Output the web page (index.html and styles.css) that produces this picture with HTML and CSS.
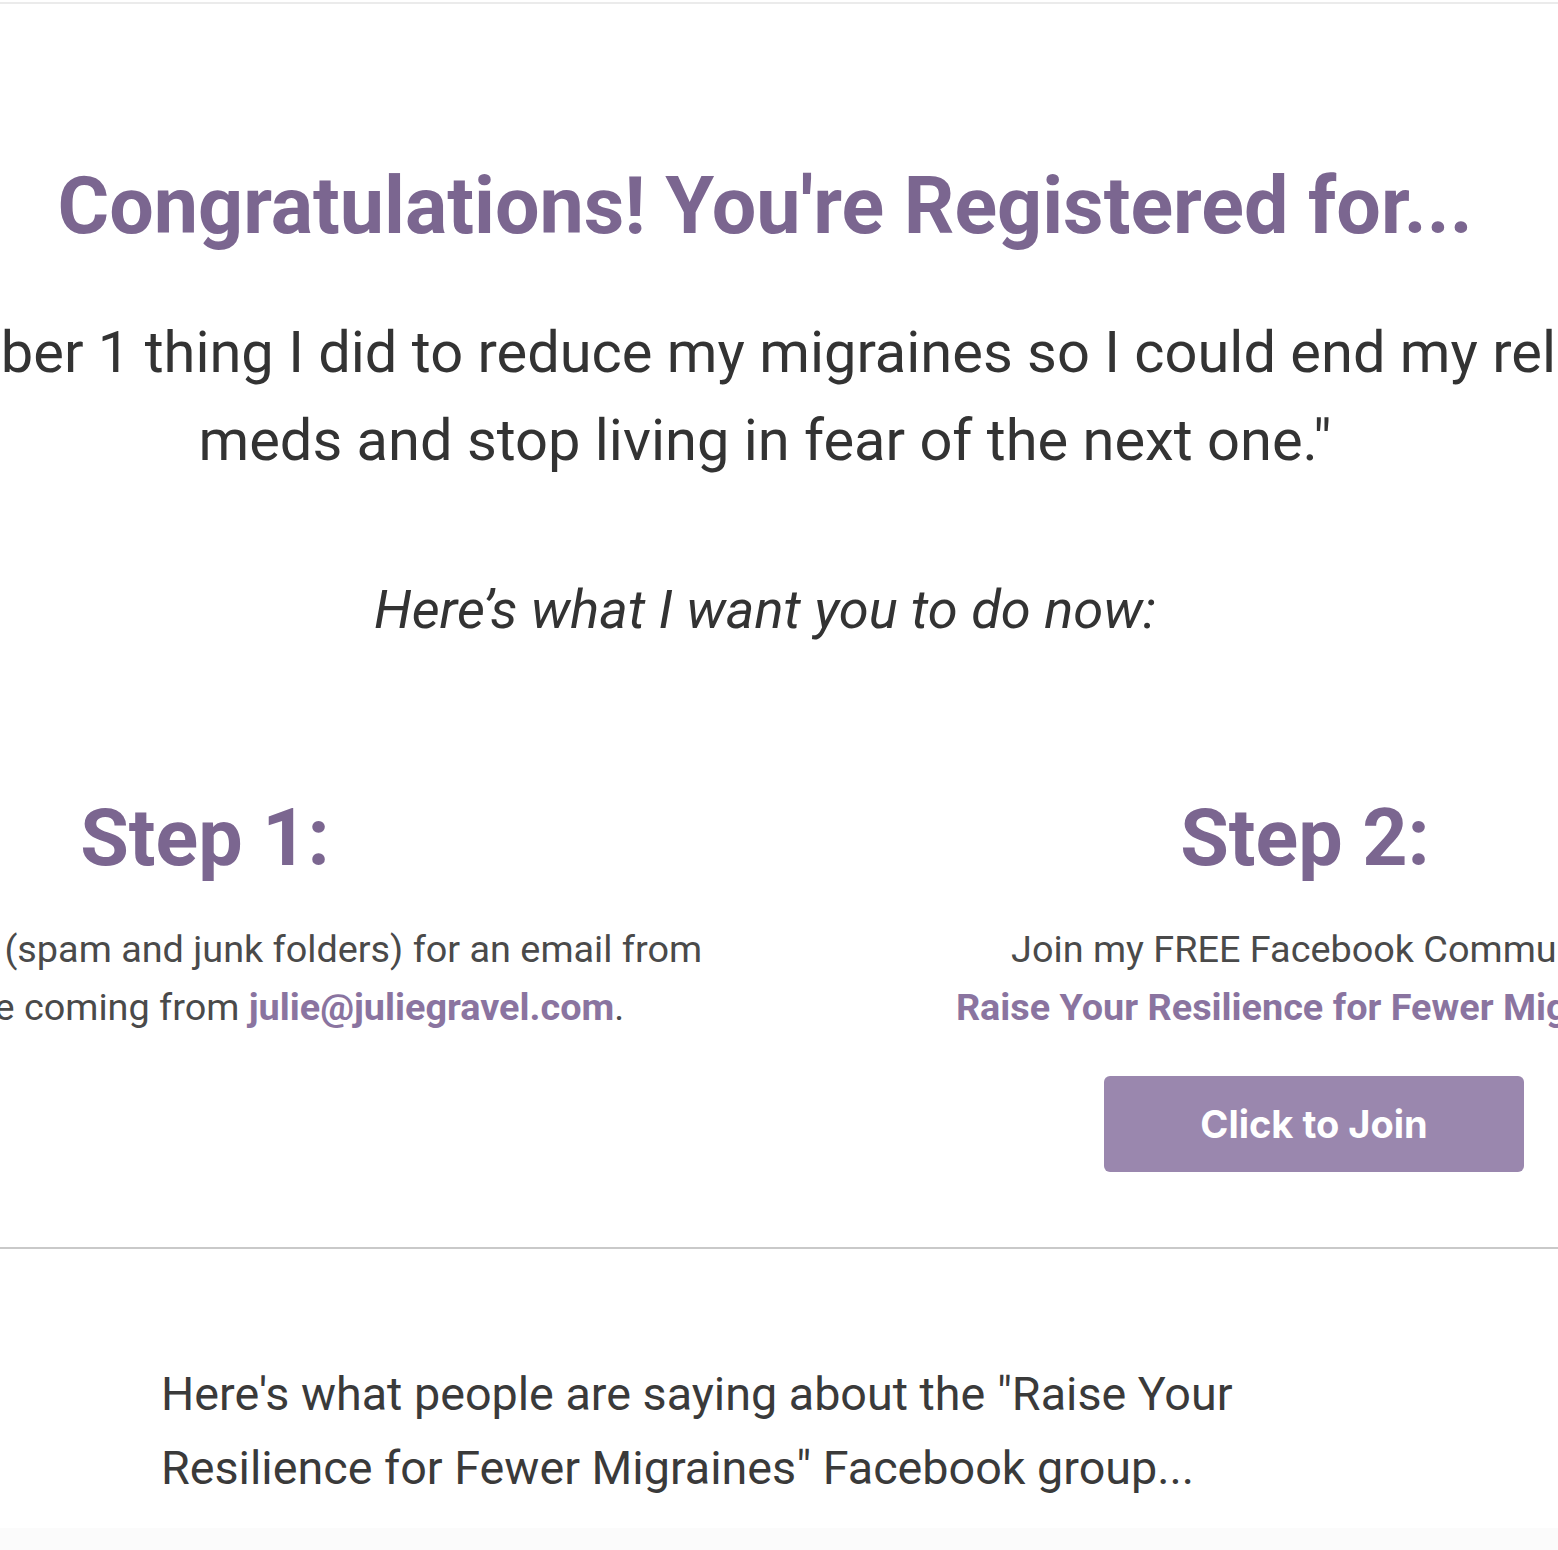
FILE: index.html
```html
<!DOCTYPE html>
<html lang="en">
<head>
<meta charset="utf-8">
<title>Congratulations! You're Registered</title>
<link rel="stylesheet" href="styles.css">
</head>
<body>
<div class="topline"></div>
<main class="page">
  <section class="hero">
    <h1 class="title">Congratulations! You're Registered for...</h1>
    <p class="quote">
      <span class="quote-line">"The number 1 thing I did to reduce my migraines so I could end my reliance on</span>
      <span class="quote-line">meds and stop living in fear of the next one."</span>
    </p>
    <p class="lead">Here’s what I want you to do now:</p>
  </section>

  <section class="steps">
    <div class="step step-one">
      <h2 class="step-title">Step 1:</h2>
      <p class="step-text">
        <span class="step-line">Check your inbox (spam and junk folders) for an email from</span>
        <span class="step-line">me. They'll be coming from <a class="link" href="#">julie@juliegravel.com</a>.</span>
      </p>
    </div>
    <div class="step step-two">
      <h2 class="step-title step-title-two">Step 2:</h2>
      <p class="step-text">
        <span class="step-line">Join my FREE Facebook Community</span>
        <span class="step-line"><a class="link" href="#">Raise Your Resilience for Fewer Migraines</a></span>
      </p>
      <a class="join-btn" href="#">Click to Join</a>
    </div>
  </section>

  <hr class="divider">

  <section class="testimonials">
    <p class="testimonials-intro">Here's what people are saying about the "Raise Your Resilience for Fewer Migraines" Facebook group...</p>
  </section>
  <div class="next-band"></div>
</main>
</body>
</html>
```

FILE: styles.css
```css
html, body {
  margin: 0;
  padding: 0;
  background: #ffffff;
}

body {
  font-family: Roboto, "Liberation Sans", Arial, sans-serif;
  color: #333333;
  overflow-x: hidden;
}

.topline {
  height: 2px;
  margin-top: 2px;
  background: #ebebeb;
}

.page {
  width: 1530px;
}

.hero {
  display: flex;
  flex-direction: column;
  align-items: center;
  padding-top: 155px;
}

.title {
  margin: 0;
  font-size: 79px;
  line-height: 94px;
  font-weight: 700;
  color: #7b6690;
  white-space: nowrap;
}

.quote {
  margin: 55px 0 0;
  display: flex;
  flex-direction: column;
  align-items: center;
  font-size: 57.8px;
  line-height: 88px;
  color: #333333;
}

.quote-line {
  white-space: nowrap;
}

.lead {
  margin: 94px 0 0;
  font-size: 54.3px;
  line-height: 64px;
  font-style: italic;
  color: #333333;
  white-space: nowrap;
}

.steps {
  display: grid;
  grid-template-columns: 1100px 1118px;
  margin-left: -345px;
  margin-top: 149px;
}

.step {
  display: flex;
  flex-direction: column;
  align-items: center;
}

.step-title {
  margin: 0;
  font-size: 79px;
  line-height: 94px;
  font-weight: 700;
  color: #7b6690;
  white-space: nowrap;
}

.step-title-two {
  padding-right: 18px;
}

.step-text {
  margin: 35px 0 0;
  display: flex;
  flex-direction: column;
  align-items: center;
  font-size: 37.8px;
  line-height: 58px;
  color: #4a4a4a;
}

.step-line {
  white-space: nowrap;
}

.link {
  color: #8a74a0;
  font-weight: 700;
  text-decoration: none;
}

.join-btn {
  display: flex;
  align-items: center;
  justify-content: center;
  box-sizing: border-box;
  width: 420px;
  height: 96px;
  margin-top: 40px;
  border-radius: 6px;
  background: #9a87ae;
  color: #ffffff;
  font-family: Inter, Roboto, sans-serif;
  font-size: 38px;
  font-weight: 700;
  text-decoration: none;
}

.divider {
  margin: 75px 0 0;
  width: 1558px;
  height: 2px;
  border: 0;
  background: #c9c9c9;
}

.testimonials {
  padding: 108px 0 0 161px;
}

.testimonials-intro {
  margin: 0;
  width: 1120px;
  font-size: 46.7px;
  line-height: 74px;
  color: #3a3a3a;
}

.next-band {
  margin-top: 23px;
  width: 1558px;
  height: 200px;
  background: #fbfbfb;
}
```
